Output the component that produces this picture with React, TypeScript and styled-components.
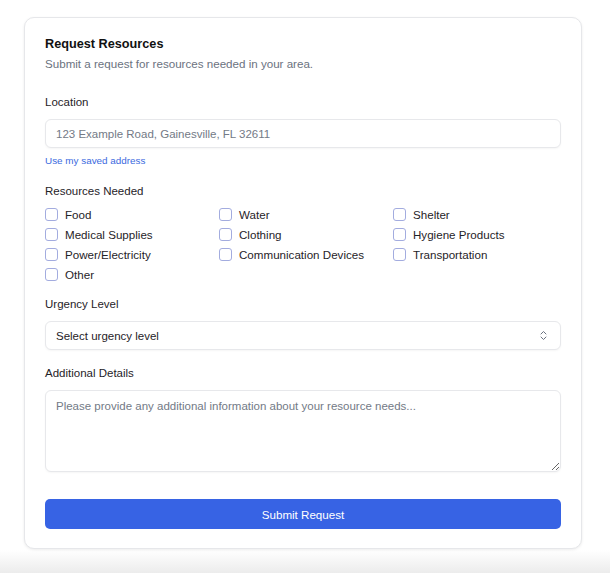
import styled, { createGlobalStyle } from "styled-components";

const GlobalStyle = createGlobalStyle`
  html, body {
    margin: 0;
    padding: 0;
  }
  body {
    min-height: 573px;
    font-family: "Liberation Sans", Arial, sans-serif;
    background: linear-gradient(to bottom, #ffffff 0, #ffffff 550px, #ececec 573px);
  }
`;

const Page = styled.div`
  padding: 17px 28px 0 24px;
`;

const Card = styled.div`
  background: #fff;
  border: 1px solid #e6e7ea;
  border-radius: 10px;
  box-shadow: 0 1px 3px rgba(0, 0, 0, 0.08);
  padding: 18px 20px 19px 20px;
  display: flex;
  flex-direction: column;
`;

const Title = styled.h2`
  margin: 0;
  font-size: 12.7px;
  line-height: 16px;
  font-weight: 700;
  color: #111111;
`;

const Subtitle = styled.p`
  margin: 4px 0 0;
  font-size: 11.6px;
  line-height: 16px;
  color: #6b7280;
`;

const Field = styled.div<{ $top: number }>`
  margin-top: ${(p) => p.$top}px;
  display: flex;
  flex-direction: column;
`;

const Label = styled.label`
  font-size: 11.5px;
  line-height: 16px;
  color: #1f2328;
  margin-bottom: 9px;
`;

const Box = styled.div`
  box-sizing: border-box;
  border: 1px solid #e7e8eb;
  border-radius: 6px;
  box-shadow: 0 1px 2px rgba(0, 0, 0, 0.04);
  background: #fff;
  font-size: 11.5px;
  padding: 0 10px;
`;

const Input = styled(Box).attrs({ as: "input" })`
  height: 29px;
  width: 100%;
  font-family: inherit;
  outline: none;
  color: #1f2328;
  &::placeholder {
    color: #737a86;
  }
`;

const SavedLink = styled.a`
  margin-top: 6px;
  font-size: 9.9px;
  line-height: 14px;
  color: #3b6ae0;
  text-decoration: none;
  cursor: pointer;
`;

const CheckGrid = styled.div`
  display: grid;
  grid-template-columns: repeat(3, 1fr);
  column-gap: 6px;
  margin-top: -4px;
`;

const CheckItem = styled.label`
  display: flex;
  align-items: center;
  gap: 7px;
  height: 20px;
  font-size: 11.6px;
  color: #1f2328;
  cursor: pointer;
`;

const CheckBox = styled.span`
  box-sizing: border-box;
  width: 13px;
  height: 13px;
  border: 1px solid #a3acdf;
  border-radius: 3px;
  background: #fff;
`;

const SelectBox = styled(Box)`
  height: 29px;
  display: flex;
  align-items: center;
  justify-content: space-between;
  color: #1f2328;
  padding-right: 12px;
`;

const TextArea = styled(Box).attrs({ as: "textarea" })`
  height: 82px;
  width: 100%;
  font-family: inherit;
  padding-top: 9px;
  resize: vertical;
  outline: none;
  &::placeholder {
    color: #737a86;
  }
`;

const SubmitButton = styled.button`
  margin-top: 27px;
  height: 30px;
  border: none;
  border-radius: 5px;
  background: #3763e4;
  color: #fff;
  font-family: inherit;
  font-size: 11.6px;
  cursor: pointer;
`;

const resources = [
  "Food",
  "Water",
  "Shelter",
  "Medical Supplies",
  "Clothing",
  "Hygiene Products",
  "Power/Electricity",
  "Communication Devices",
  "Transportation",
  "Other",
];

function UpDown() {
  return (
    <svg width="9" height="11" viewBox="0 0 9 11" fill="none" stroke="#6b7280" strokeWidth="1" strokeLinecap="round" strokeLinejoin="round">
      <path d="M2 4 L4.5 1.5 L7 4" />
      <path d="M2 7 L4.5 9.5 L7 7" />
    </svg>
  );
}

export default function App() {
  return (
    <>
      <GlobalStyle />
      <Page>
        <Card>
          <Title>Request Resources</Title>
          <Subtitle>Submit a request for resources needed in your area.</Subtitle>

          <Field $top={22}>
            <Label>Location</Label>
            <Input placeholder="123 Example Road, Gainesville, FL 32611" />
            <SavedLink>Use my saved address</SavedLink>
          </Field>

          <Field $top={15}>
            <Label>Resources Needed</Label>
            <CheckGrid>
              {resources.map((r) => (
                <CheckItem key={r}>
                  <CheckBox />
                  {r}
                </CheckItem>
              ))}
            </CheckGrid>
          </Field>

          <Field $top={12}>
            <Label>Urgency Level</Label>
            <SelectBox>
              <span>Select urgency level</span>
              <UpDown />
            </SelectBox>
          </Field>

          <Field $top={15}>
            <Label>Additional Details</Label>
            <TextArea placeholder="Please provide any additional information about your resource needs..." />
          </Field>

          <SubmitButton>Submit Request</SubmitButton>
        </Card>
      </Page>
    </>
  );
}
